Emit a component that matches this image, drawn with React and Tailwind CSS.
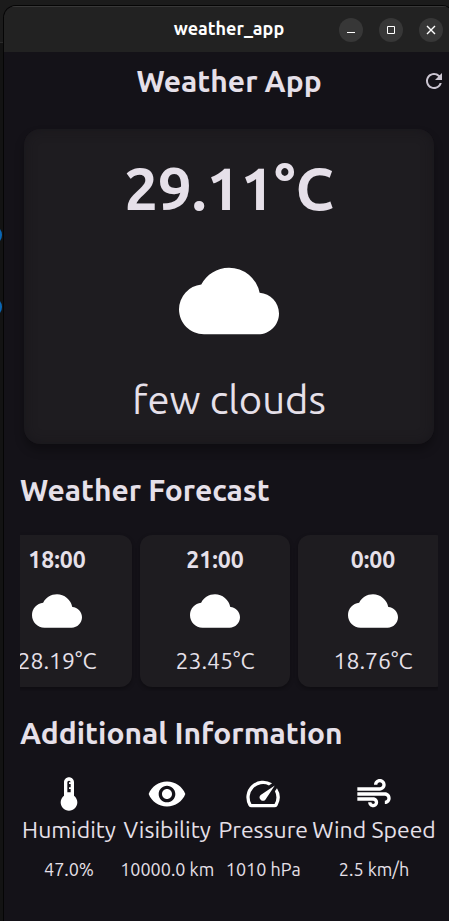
import { MdAir, MdCloud, MdDeviceThermostat, MdRefresh, MdRemoveRedEye, MdSpeed } from "react-icons/md";

const forecast = [
  { time: "18:00", temp: "28.19°C" },
  { time: "21:00", temp: "23.45°C" },
  { time: "0:00", temp: "18.76°C" },
];

const details = [
  { label: "Humidity", value: "47.0%", Icon: MdDeviceThermostat },
  { label: "Visibility", value: "10000.0 km", Icon: MdRemoveRedEye },
  { label: "Pressure", value: "1010 hPa", Icon: MdSpeed },
  { label: "Wind Speed", value: "2.5 km/h", Icon: MdAir },
];

function WindowButton({ label, children }) {
  return (
    <button aria-label={label} className="flex size-6 items-center justify-center rounded-full bg-[#373737] text-white">
      <svg viewBox="0 0 16 16" className="size-4" fill="none" stroke="currentColor">
        {children}
      </svg>
    </button>
  );
}

function TitleBar() {
  return (
    <header className="grid h-[46px] grid-cols-[1fr_auto_1fr] items-center border-t border-[#383838] bg-[#222222] pr-[11px]">
      <span />
      <span className="pb-1 pl-[11px] text-[18px] leading-6 font-bold text-white">weather_app</span>
      <div className="flex justify-end gap-4">
        <WindowButton label="Minimize"><path d="M4 10.5h8" /></WindowButton>
        <WindowButton label="Maximize"><path d="M4.5 4.5h7v7h-7z" /></WindowButton>
        <WindowButton label="Close"><path d="M4 4l8 8M12 4l-8 8" strokeWidth="1.4" /></WindowButton>
      </div>
    </header>
  );
}

export default function App() {
  return (
    <div className="min-h-screen overflow-hidden bg-[linear-gradient(#1b1b1b_42px,#2a2a2a_42px,#2a2a2a_43px,#131313_43px)] pt-[6px] pl-1 font-['Ubuntu','Noto_Sans',sans-serif] text-[#e6e0e9]">
      <span className="absolute top-[225px] -left-[18px] size-5 rounded-full bg-[#0a66b5]" />
      <span className="absolute top-[297px] -left-[18px] size-5 rounded-full bg-[#0a66b5]" />
      <div className="-mr-[5px] min-h-[calc(100vh-6px)] overflow-hidden rounded-t-xl bg-[#141218] shadow-[0_0_0_1px_#050505]">
        <TitleBar />
        <div className="grid h-[58px] grid-cols-[1fr_auto_1fr] items-center pr-2">
          <span />
          <h1 className="pl-2 text-[30px] leading-[40px] font-bold">Weather App</h1>
          <button aria-label="Refresh" className="justify-self-end text-[#cac4d0]">
            <MdRefresh className="size-6" />
          </button>
        </div>
        <main className="px-4 pt-[19px] pb-4">
          <section className="mx-1 flex h-[315px] flex-col items-center justify-between rounded-2xl bg-[#1e1c20] px-4 pt-[18px] pb-4 shadow-[0_6px_10px_rgba(0,0,0,0.3),inset_0_0_12px_rgba(20,18,24,0.6)]">
            <p className="text-[60px] leading-[82px] font-bold">29.11°C</p>
            <MdCloud className="size-[100px] text-white" />
            <p className="text-[40px] leading-[56px]">few clouds</p>
          </section>
          <h2 className="mt-[26px] text-[30px] leading-[40px] font-bold">Weather Forecast</h2>
          <div className="mt-[21px] overflow-hidden pt-1 pb-1">
            <div className="-ml-[38px] flex gap-2">
              {forecast.map(({ time, temp }) => (
                <article key={time} className="flex h-[152px] w-[150px] shrink-0 flex-col items-center justify-between rounded-xl bg-[#1e1c20] px-2 pt-2 pb-[10px] shadow-[0_2px_4px_rgba(0,0,0,0.3)]">
                  <p className="text-[23px] leading-[34px] font-bold">{time}</p>
                  <MdCloud className="size-[50px] text-white" />
                  <p className="text-[23px] leading-8">{temp}</p>
                </article>
              ))}
            </div>
          </div>
          <h2 className="mt-[22px] text-[30px] leading-[40px] font-bold">Additional Information</h2>
          <div className="mt-[21px] flex justify-around">
            {details.map(({ label, value, Icon }) => (
              <div key={label} className="flex flex-col items-center whitespace-nowrap">
                <Icon className="size-10 text-white" />
                <p className="text-[23px] leading-8">{label}</p>
                <p className="mt-[7px] text-[18px] leading-8">{value}</p>
              </div>
            ))}
          </div>
        </main>
      </div>
    </div>
  );
}
